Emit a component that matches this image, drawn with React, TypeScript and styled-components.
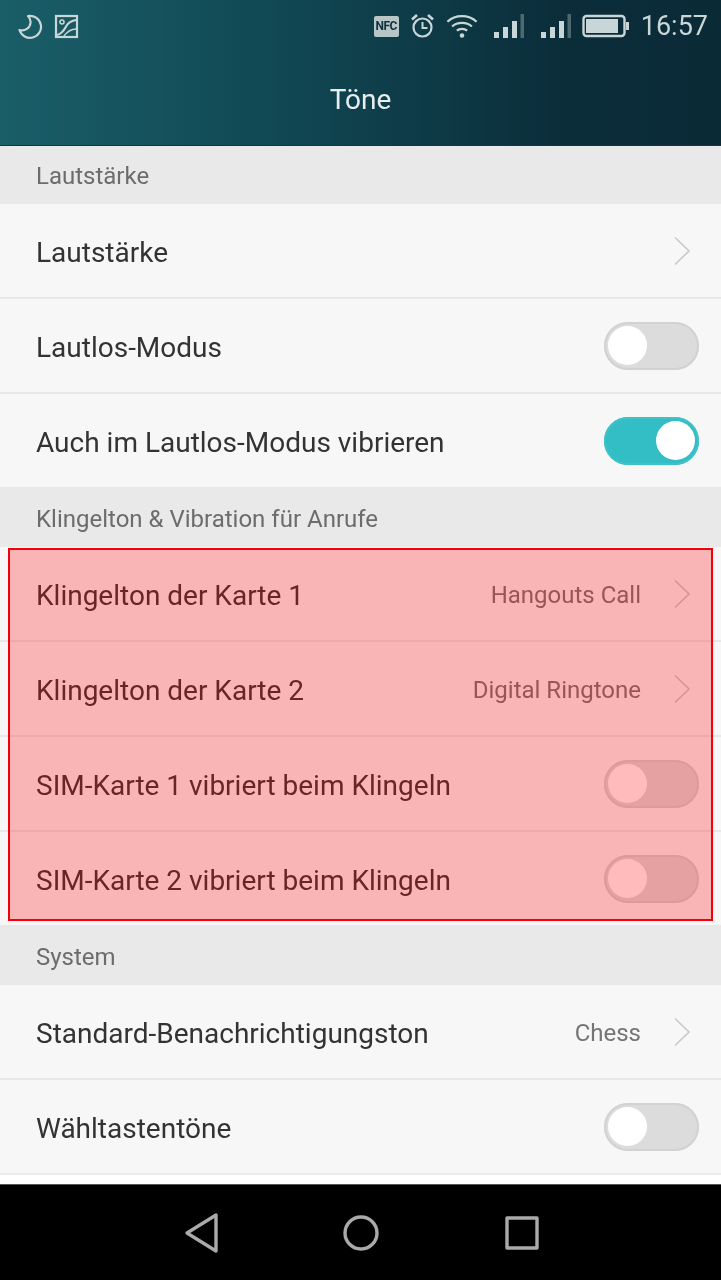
import React from "react";
import styled, { createGlobalStyle } from "styled-components";

const GlobalStyle = createGlobalStyle`
    html, body {
        margin: 0;
        padding: 0;
        background: #fff;
    }
    body {
        font-family: Roboto, "Liberation Sans", sans-serif;
    }
`;

const Screen = styled.div`
    display: flex;
    flex-direction: column;
    width: 721px;
    height: 1280px;
    overflow: hidden;
    background: #fff;
    filter: blur(0.5px);
`;

const Header = styled.header`
    flex: none;
    height: 146px;
    background: linear-gradient(90deg, #1a5e68 0%, #124d58 30%, #0e3d49 55%, #0b2d3a 78%, #0a2a36 100%);
    border-bottom: 1px solid #0c3a44;
    box-sizing: border-box;
`;

const StatusBar = styled.div`
    display: flex;
    justify-content: space-between;
    align-items: center;
    height: 52px;
    padding: 0 13px 0 18px;
    color: #c9d6d8;
`;

const StatusGroup = styled.div<{ $gap: number; $inset?: number }>`
    display: flex;
    align-items: center;
    gap: ${(p) => p.$gap}px;
    margin-left: ${(p) => p.$inset ?? 0}px;
`;

const NfcBadge = styled.span`
    display: block;
    width: 25px;
    height: 21px;
    line-height: 21px;
    border-radius: 2px;
    background: #b9c6c8;
    color: #12323d;
    font-size: 12px;
    font-weight: 700;
    text-align: center;
    letter-spacing: -0.5px;
`;

const Clock = styled.span`
    font-size: 27px;
    line-height: 30px;
`;

const Title = styled.h1`
    margin: 0;
    height: 93px;
    line-height: 96px;
    text-align: center;
    font-size: 28px;
    font-weight: 400;
    color: #e6eeee;
`;

const Content = styled.main`
    flex: 1;
    overflow: hidden;
`;

const SectionLabel = styled.div`
    box-sizing: border-box;
    height: 58px;
    line-height: 60px;
    padding-left: 36px;
    background: #e9e9e9;
    color: #6c6c6c;
    font-size: 24px;
`;

const Row = styled.div`
    box-sizing: border-box;
    display: flex;
    align-items: center;
    height: 95px;
    padding: 0 22px 0 36px;
    background: #f7f7f7;
    border-bottom: 2px solid #e8e8e8;
    &:last-child {
        border-bottom-color: #ececec;
    }
`;

const RowLabel = styled.span`
    flex: 1;
    padding-top: 4px;
    font-size: 28px;
    color: #333;
`;

const RowValue = styled.span`
    padding-top: 2px;
    font-size: 24px;
    color: #757575;
    margin-right: 32px;
`;

const ChevronSvg = styled.svg`
    flex: none;
    width: 18px;
    height: 30px;
    margin-right: 8px;
`;

const Track = styled.div<{ $on: boolean }>`
    box-sizing: border-box;
    flex: none;
    display: flex;
    justify-content: ${(p) => (p.$on ? "flex-end" : "flex-start")};
    align-items: center;
    width: 95px;
    height: 48px;
    padding: 0 4px;
    border-radius: 24px;
    background: ${(p) => (p.$on ? "#33bdc4" : "#dcdcdc")};
    box-shadow: inset 0 0 0 2px ${(p) => (p.$on ? "#3cc2c8" : "#d2d2d2")};
`;

const Knob = styled.div`
    width: 39px;
    height: 39px;
    border-radius: 50%;
    background: #fff;
`;

const Marked = styled.div`
    position: relative;
`;

const Highlight = styled.div`
    position: absolute;
    top: 1px;
    left: 8px;
    right: 8px;
    bottom: 6px;
    box-sizing: border-box;
    border: 2px solid #f5000a;
    background: rgba(255, 0, 0, 0.267);
`;

const NavBar = styled.nav`
    flex: none;
    height: 96px;
    background: #000;
    display: grid;
    grid-template-columns: repeat(3, 160px);
    justify-content: center;
    align-items: center;
    justify-items: center;
    border-top: 1px solid #555;
    box-sizing: border-box;
`;

const NavIcon = styled.svg`
    width: 40px;
    height: 42px;
`;

function Chevron() {
    return (
        <ChevronSvg viewBox="0 0 18 30" fill="none">
            <path d="M2 1.5 L16 15 L2 28.5" stroke="#c9c9c9" strokeWidth="1.6" />
        </ChevronSvg>
    );
}

function Toggle({ on = false }: { on?: boolean }) {
    return (
        <Track $on={on}>
            <Knob />
        </Track>
    );
}

function MoonIcon() {
    return (
        <svg width="25" height="25" viewBox="0 0 25 25" fill="none" stroke="currentColor" strokeWidth="2.2" strokeLinejoin="round">
            <path d="M10 2 A11 11 0 1 1 1.5 16 C7 17.5 12 14 12.5 9 C12.8 6.5 12 4 10 2 Z" />
        </svg>
    );
}

function PictureIcon() {
    return (
        <svg width="25" height="25" viewBox="0 0 25 25" fill="none" stroke="currentColor" strokeWidth="2.2">
            <rect x="2" y="2" width="21" height="21" />
            <circle cx="8" cy="8" r="2" strokeWidth="1.6" />
            <path d="M3 21 C9 20 11 14 13 11 S17 7 22 6" />
            <path d="M10 22 C13 18 17 15 22 15" strokeWidth="1.6" />
        </svg>
    );
}

function AlarmIcon() {
    return (
        <svg width="25" height="26" viewBox="0 0 25 26" fill="none" stroke="currentColor" strokeWidth="2.2">
            <circle cx="12.5" cy="14.5" r="9" />
            <path d="M12.5 9v6h5" strokeWidth="2" />
            <path d="M2 6.5 L7 2 M23 6.5 L18 2" strokeWidth="2.6" />
        </svg>
    );
}

function WifiIcon() {
    return (
        <svg width="32" height="26" viewBox="0 0 34 26" fill="none" stroke="currentColor" strokeWidth="2.4">
            <path d="M1.5 8.5 C10 0.5 24 0.5 32.5 8.5" />
            <path d="M6.5 13.5 C12 8.5 22 8.5 27.5 13.5" />
            <path d="M11.5 18 C14.5 15.5 19.5 15.5 22.5 18" />
            <circle cx="17" cy="23" r="2.4" fill="currentColor" stroke="none" />
        </svg>
    );
}

function SignalIcon() {
    return (
        <svg width="30" height="26" viewBox="0 0 30 26" fill="currentColor">
            <rect x="0" y="19" width="5" height="6" />
            <rect x="9" y="14" width="5" height="11" />
            <rect x="18" y="8" width="5" height="17" />
            <rect x="26.5" y="1" width="3.5" height="24" opacity="0.35" />
        </svg>
    );
}

function BatteryIcon() {
    return (
        <svg width="48" height="24" viewBox="0 0 48 24" fill="none">
            <rect x="1.5" y="2" width="41" height="20" rx="3" stroke="currentColor" strokeWidth="2.4" />
            <rect x="4" y="5" width="32" height="14" fill="currentColor" />
            <rect x="44" y="8" width="3" height="8" fill="currentColor" />
        </svg>
    );
}

export default function App() {
    return (
        <Screen>
            <GlobalStyle />
            <Header>
                <StatusBar>
                    <StatusGroup $gap={11}>
                        <MoonIcon />
                        <PictureIcon />
                    </StatusGroup>
                    <StatusGroup $gap={11}>
                        <NfcBadge>NFC</NfcBadge>
                        <AlarmIcon />
                        <WifiIcon />
                        <StatusGroup $gap={17} $inset={5}>
                            <SignalIcon />
                            <SignalIcon />
                        </StatusGroup>
                        <BatteryIcon />
                        <Clock>16:57</Clock>
                    </StatusGroup>
                </StatusBar>
                <Title>Töne</Title>
            </Header>
            <Content>
                <SectionLabel>Lautstärke</SectionLabel>
                <Row>
                    <RowLabel>Lautstärke</RowLabel>
                    <Chevron />
                </Row>
                <Row>
                    <RowLabel>Lautlos-Modus</RowLabel>
                    <Toggle />
                </Row>
                <Row>
                    <RowLabel>Auch im Lautlos-Modus vibrieren</RowLabel>
                    <Toggle on />
                </Row>
                <SectionLabel>Klingelton &amp; Vibration für Anrufe</SectionLabel>
                <Marked>
                    <Row>
                        <RowLabel>Klingelton der Karte 1</RowLabel>
                        <RowValue>Hangouts Call</RowValue>
                        <Chevron />
                    </Row>
                    <Row>
                        <RowLabel>Klingelton der Karte 2</RowLabel>
                        <RowValue>Digital Ringtone</RowValue>
                        <Chevron />
                    </Row>
                    <Row>
                        <RowLabel>SIM-Karte 1 vibriert beim Klingeln</RowLabel>
                        <Toggle />
                    </Row>
                    <Row>
                        <RowLabel>SIM-Karte 2 vibriert beim Klingeln</RowLabel>
                        <Toggle />
                    </Row>
                    <Highlight />
                </Marked>
                <SectionLabel>System</SectionLabel>
                <Row>
                    <RowLabel>Standard-Benachrichtigungston</RowLabel>
                    <RowValue>Chess</RowValue>
                    <Chevron />
                </Row>
                <Row>
                    <RowLabel>Wähltastentöne</RowLabel>
                    <Toggle />
                </Row>
            </Content>
            <NavBar>
                <NavIcon viewBox="0 0 40 42" fill="none" stroke="#aaa" strokeWidth="3.4" strokeLinejoin="round">
                    <path d="M6 21 L35 3 V39 Z" />
                </NavIcon>
                <NavIcon viewBox="0 0 40 42" fill="none" stroke="#aaa" strokeWidth="3.4">
                    <circle cx="20" cy="21" r="16" />
                </NavIcon>
                <NavIcon viewBox="0 0 40 42" fill="none" stroke="#aaa" strokeWidth="3.4" strokeLinejoin="round">
                    <rect x="6" y="6" width="30" height="30" />
                </NavIcon>
            </NavBar>
        </Screen>
    );
}
